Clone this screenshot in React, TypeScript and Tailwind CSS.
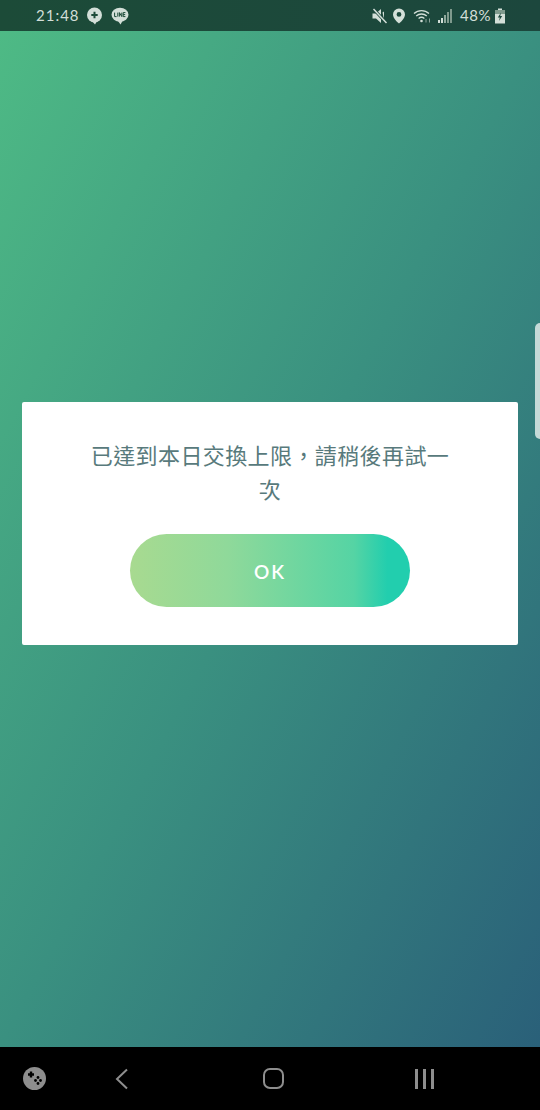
import React from 'react';

const statusColor = '#d3dfd8';

function StatusBar() {
    return (
        <div className="flex h-[31px] items-center bg-[linear-gradient(to_right,#1c4b38,#1c473d)] pl-[36px]">
            <span
                className="w-[40px] text-[15px] leading-none tracking-[1px] text-[#d3dfd8]"
                style={{ fontFamily: '"Lato", sans-serif' }}
            >
                21:48
            </span>
            {/* Bubble with plus */}
            <svg className="ml-[10px] h-[18px] w-[17px]" viewBox="0 0 17 18">
                <circle cx="8.5" cy="8" r="7.5" fill={statusColor} />
                <path d="M6 14l3 3.5 2-3.5z" fill={statusColor} />
                <path d="M8.5 4.8v6.4M5.3 8h6.4" stroke="#1c4b38" strokeWidth="2" />
            </svg>
            {/* LINE bubble */}
            <svg className="ml-[8px] h-[18px] w-[18px]" viewBox="0 0 18 18">
                <ellipse cx="9" cy="7.8" rx="8.5" ry="7" fill={statusColor} />
                <path d="M7 14l2.5 3.5L11.5 14z" fill={statusColor} />
                <path d="M3.6 5.6v4h2M6.8 5.6v4M8.4 9.6v-4l2.4 4v-4M14.4 5.6h-2.2v4h2.2M12.2 7.6h2" fill="none" stroke="#1c4b38" strokeWidth="1" />
            </svg>

            <div className="ml-auto flex items-center pr-[34px]">
                {/* Muted speaker */}
                <svg className="h-[16px] w-[16px]" viewBox="0 0 16 16">
                    <path d="M0.5 5.5h3.5l5-4.5v14l-5-4.5h-3.5z" fill={statusColor} />
                    <path d="M10.5 4.5l1.5-1v8z" fill={statusColor} />
                    <path d="M1.5 1l13 14" stroke="#1c473d" strokeWidth="3" />
                    <path d="M1.5 1l13 14" stroke={statusColor} strokeWidth="1.5" />
                </svg>
                {/* Location pin */}
                <svg className="ml-[4px] h-[16px] w-[14px]" viewBox="0 0 14 16">
                    <path fillRule="evenodd" d="M7 0.5a6 6 0 0 1 6 6c0 3.6-4 7.4-6 9-2-1.6-6-5.4-6-9a6 6 0 0 1 6-6zm0 3.5a2.4 2.4 0 1 0 0 4.8 2.4 2.4 0 0 0 0-4.8z" fill={statusColor} />
                </svg>
                {/* Wifi with data arrows */}
                <svg className="ml-[7px] h-[16px] w-[20px]" viewBox="0 0 20 16">
                    <path d="M1 5.5a11 11 0 0 1 15 0M3.2 8a8 8 0 0 1 10.6 0M5.6 10.4a4.6 4.6 0 0 1 5.8 0" fill="none" stroke={statusColor} strokeWidth="1.3" />
                    <circle cx="8.5" cy="13" r="1.3" fill={statusColor} />
                    <path d="M13 11v3.5M16.5 14.5v-4" stroke={statusColor} strokeWidth="1" opacity="0.6" />
                </svg>
                {/* Signal bars */}
                <div className="ml-[5px] flex h-[15px] items-end gap-[1px]">
                    <div className="h-[3px] w-[2px] bg-[#d3dfd8]" />
                    <div className="h-[5px] w-[2px] bg-[#d3dfd8]" />
                    <div className="h-[8px] w-[2px] bg-[#8fa89c]" />
                    <div className="h-[11px] w-[2px] bg-[#7f9a8d]" />
                    <div className="h-[14px] w-[2px] bg-[#7f9a8d]" />
                </div>
                <span
                    className="ml-[8px] w-[30px] text-[15px] leading-none tracking-[0.6px] text-[#d3dfd8]"
                    style={{ fontFamily: '"Lato", sans-serif' }}
                >
                    48%
                </span>
                {/* Charging battery */}
                <svg className="ml-[4px] h-[16px] w-[12px]" viewBox="0 0 12 16">
                    <path d="M4 0.5h4v1.5h3v13.5H1V2h3z" fill={statusColor} />
                    <path d="M1 2h10v4H1z" fill="#7f9a8d" />
                    <path d="M7 4.5L3.8 9.5h2L5 13l3.2-5h-2z" fill="#1c473d" />
                </svg>
            </div>
        </div>
    );
}

function NavBar() {
    return (
        <div className="flex h-[63px] items-center bg-black pl-[23px]">
            {/* Game launcher */}
            <svg className="h-[23px] w-[23px]" viewBox="0 0 23 23">
                <circle cx="11.5" cy="11.5" r="11.5" fill="#8e8e8e" />
                <path d="M8 4.5v6M5 7.5h6" stroke="#000" strokeWidth="2.4" />
                <circle cx="15" cy="10.5" r="1.4" fill="#000" />
                <circle cx="12.5" cy="13.5" r="1.4" fill="#000" />
                <circle cx="17.5" cy="13.5" r="1.4" fill="#000" />
                <circle cx="15" cy="16.5" r="1.4" fill="#000" />
            </svg>
            {/* Back */}
            <svg className="ml-[69px] h-[22px] w-[13px]" viewBox="0 0 13 22">
                <path d="M12 1.5L2 11l10 9.5" fill="none" stroke="#8e8e8e" strokeWidth="2" />
            </svg>
            {/* Home */}
            <div className="ml-[135px] h-[21px] w-[21px] rounded-[7px] border-2 border-[#8e8e8e]" />
            {/* Recents */}
            <div className="ml-[131px] flex gap-[5px]">
                <div className="h-[20px] w-[3px] bg-[#8e8e8e]" />
                <div className="h-[20px] w-[3px] bg-[#8e8e8e]" />
                <div className="h-[20px] w-[3px] bg-[#8e8e8e]" />
            </div>
        </div>
    );
}

export default function App() {
    return (
        <div className="relative flex h-[1110px] w-[540px] flex-col overflow-hidden">
            <StatusBar />
            <main className="flex-1 bg-[linear-gradient(to_bottom_right,#4eba85,#3a9080_50%,#2a6079)] pt-[371px] pl-[22px]">
                <div className="flex w-[496px] flex-col items-center rounded-[2px] bg-white pt-[35px] pb-[38px]">
                    <p
                        lang="zh-TW"
                        className="w-[376px] text-center text-[22px] leading-[34px] tracking-[0.4px] text-[#587a7c]"
                        style={{ fontFamily: '"Noto Sans CJK TC", sans-serif' }}
                    >
                        已達到本日交換上限，請稍後再試一次
                    </p>
                    <button
                        className="mt-[29px] flex h-[73px] w-[280px] items-center justify-center rounded-full bg-[linear-gradient(to_right,#a8da90,#8fd99a_35%,#55d4a4_80%,#22ceae_92%)] pt-[3px] text-[19px] font-semibold tracking-[2px] text-white"
                        style={{ fontFamily: '"Lato", sans-serif' }}
                    >
                        OK
                    </button>
                </div>
            </main>
            <NavBar />
            {/* Edge panel handle */}
            <div className="absolute top-[323px] right-0 h-[116px] w-[5px] rounded-l-[5px] bg-[#c5dad8]" />
        </div>
    );
}
